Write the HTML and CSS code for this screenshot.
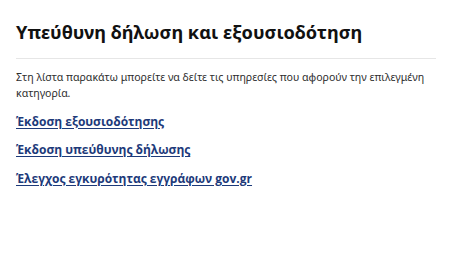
FILE: index.html
```html
<!DOCTYPE html>
<html lang="el">
<head>
<meta charset="utf-8">
<link rel="stylesheet" href="styles.css">
</head>
<body>
<main class="page">
  <h1 class="title">Υπεύθυνη δήλωση και εξουσιοδότηση</h1>
  <hr class="rule">
  <p class="intro">Στη λίστα παρακάτω μπορείτε να δείτε τις υπηρεσίες που αφορούν την επιλεγμένη κατηγορία.</p>
  <ul class="links">
    <li class="link-item"><a href="#">Έκδοση εξουσιοδότησης</a></li>
    <li class="link-item"><a href="#">Έκδοση υπεύθυνης δήλωσης</a></li>
    <li class="link-item"><a href="#">Έλεγχος εγκυρότητας εγγράφων gov.gr</a></li>
  </ul>
</main>
</body>
</html>
```
FILE: styles.css
```css
html, body {
  margin: 0;
  padding: 0;
  background: #ffffff;
}
.page {
  width: 420px;
  padding: 18px 16px 0 16px;
  font-family: "Noto Sans", "Open Sans", sans-serif;
  color: #0b0c0c;
}
.title {
  margin: 0;
  font-size: 18.2px;
  line-height: 28px;
  font-weight: 700;
  color: #111111;
}
.rule {
  margin: 12px 0 0 0;
  border: 0;
  border-top: 1px solid #e6e6e6;
  height: 0;
}
.intro {
  margin: 10px 0 0 0;
  font-size: 10.6px;
  line-height: 16px;
  color: #2e2e2e;
}
.links {
  list-style: none;
  margin: 11.5px 0 0 0;
  padding: 0;
  display: flex;
  flex-direction: column;
  gap: 11.5px;
}
.link-item {
  font-size: 12px;
  line-height: 17px;
}
.links a {
  font-family: "Open Sans", "Noto Sans", sans-serif;
  font-size: 12px;
  line-height: 17px;
  font-weight: 700;
  color: #1d3a7a;
  text-decoration: underline;
  text-underline-offset: 2px;
}
```
